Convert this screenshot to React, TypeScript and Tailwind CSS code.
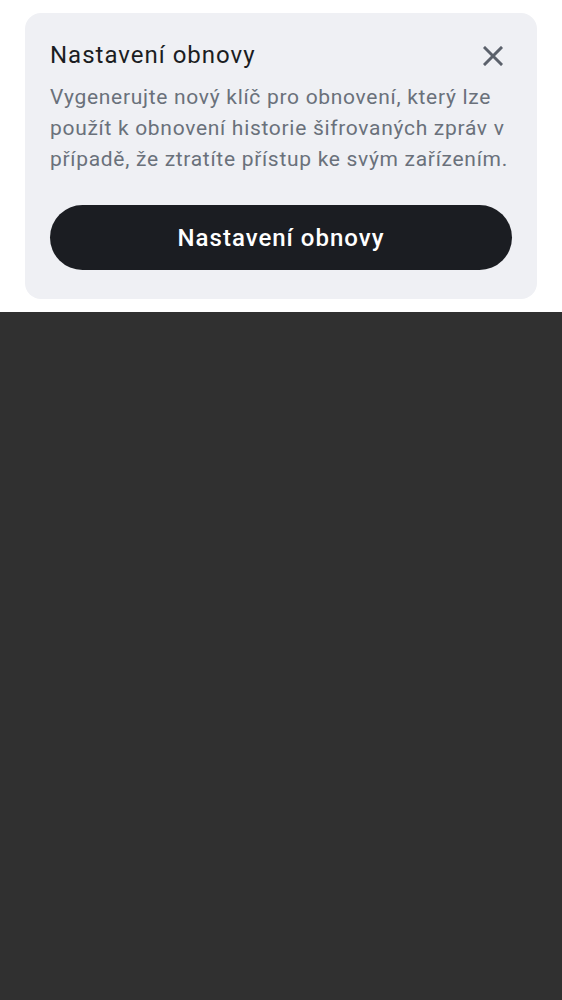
import React from "react";

export default function App() {
  return (
    <div className="w-[562px] h-[1000px] flex flex-col bg-[#303030]" style={{ fontFamily: "Roboto, 'Noto Sans', sans-serif" }}>
      <div className="bg-white pt-[13px] pb-[13px] px-[25px]">
        <div className="bg-[#eff0f4] rounded-[16px] px-[25px] pt-[27px] pb-[29px]">
          <div className="flex items-start justify-between">
            <h1 className="text-[24px] leading-[30px] tracking-[1px] text-[#1b1d22] font-normal">Nastavení obnovy</h1>
            <button className="mt-[6px] mr-[9px] text-[#5b616b]" aria-label="Zavřít">
              <svg width="20" height="20" viewBox="0 0 20 20" fill="none" stroke="currentColor" strokeWidth="3" strokeLinecap="square">
                <path d="M2 2 L18 18 M18 2 L2 18" />
              </svg>
            </button>
          </div>
          <p className="mt-[12px] text-[21px] leading-[31px] text-[#6a717b] tracking-[0.7px]">
            Vygenerujte nový klíč pro obnovení, který lze použít k obnovení historie šifrovaných zpráv v případě, že ztratíte přístup ke svým zařízením.
          </p>
          <button className="mt-[30px] w-full h-[65px] rounded-full bg-[#1b1d22] text-white text-[24px] tracking-[1px] font-medium">
            Nastavení obnovy
          </button>
        </div>
      </div>
    </div>
  );
}
